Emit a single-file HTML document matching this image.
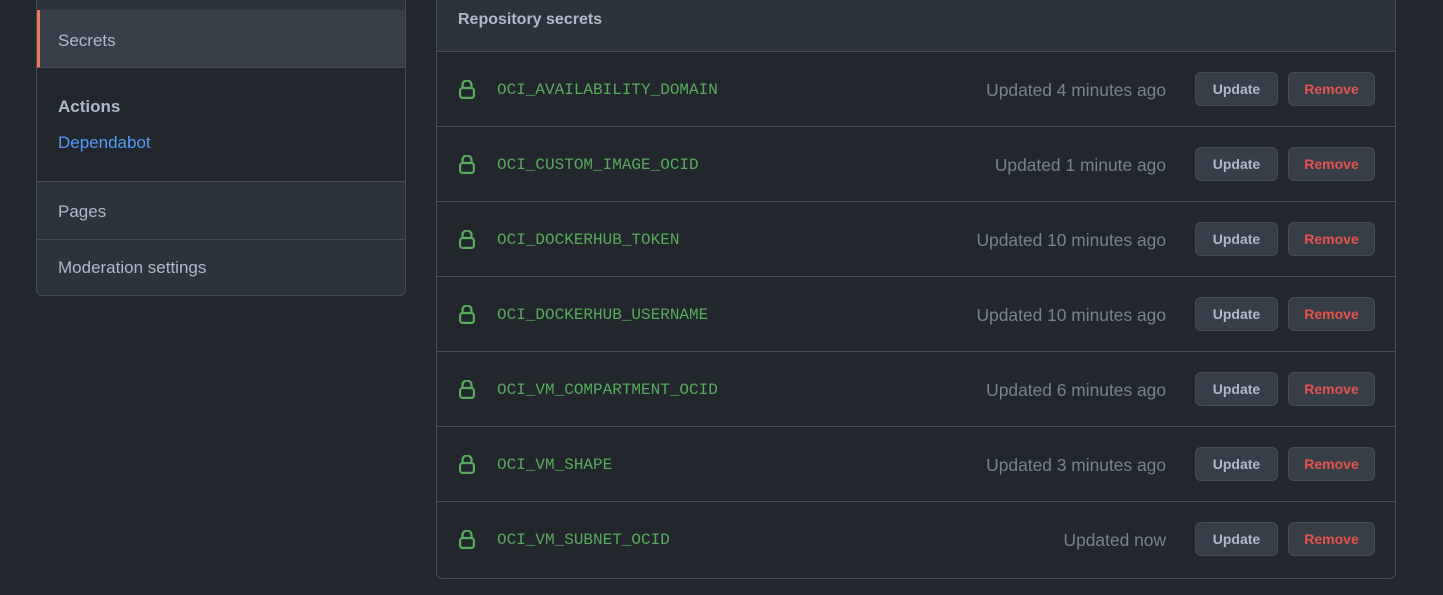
<!DOCTYPE html>
<html><head><meta charset="utf-8"><style>
*{box-sizing:border-box;margin:0;padding:0}
body{width:1443px;height:595px;background:#22272e;overflow:hidden;font-family:"Liberation Sans",sans-serif;position:relative}
.side{position:absolute;left:36px;top:-10px;width:370px;height:306px;border:1px solid #444c56;border-radius:6px;overflow:hidden;background:#2d333b}
.side div{position:absolute;left:0;right:0}
.sec{top:19px;height:58px;background:#373e47;border-left:3px solid #ec775c;border-bottom:1px solid #444c56;color:#adbac7;font-size:17px;padding:21px 0 0 18px}
.act{top:77px;height:114px;background:#22272e;border-bottom:1px solid #444c56}
.act p{position:absolute;left:21px;font-size:17px}
.pg{top:191px;height:58px;border-bottom:1px solid #444c56;color:#adbac7;font-size:17px;padding:20px 0 0 21px}
.mod{top:249px;height:58px;color:#adbac7;font-size:17px;padding:18px 0 0 21px}
.main{position:absolute;left:436px;top:-10px;width:960px;height:589px;border:1px solid #444c56;border-radius:6px;overflow:hidden}
.hd{height:61px;background:#2d333b;border-bottom:1px solid #444c56;color:#adbac7;font-weight:bold;font-size:16px;padding:20px 0 0 21px}
.row{height:75px;border-bottom:1px solid #444c56;position:relative}
.row:last-child{border-bottom:none}
.row svg{position:absolute;left:22px;top:28px}
.nm{position:absolute;left:60px;top:29px;font-family:"Liberation Mono",monospace;font-size:16px;color:#57ab5a}
.tm{position:absolute;right:229px;top:28px;font-size:17.4px;color:#768390}
.b{position:absolute;top:20px;height:34px;border:1px solid #444c56;background:#373e47;border-radius:6px;font-size:14px;font-weight:bold;text-align:center;line-height:32px}
.u{left:758px;width:83px;color:#adbac7}
.r{left:851px;width:87px;color:#e5534b}
</style></head><body>
<div class="side">
<div class="sec">Secrets</div>
<div class="act"><p style="top:29px;font-weight:bold;color:#adbac7">Actions</p><p style="top:65px;color:#539bf5">Dependabot</p></div>
<div class="pg">Pages</div>
<div class="mod">Moderation settings</div>
</div>
<div class="main">
<div class="hd">Repository secrets</div>
<div class="row"><svg width="16" height="19" viewBox="0 0 16 19"><path d="M3.5 7.5V5a4.5 4.5 0 0 1 9 0v2.5" fill="none" stroke="#57ab5a" stroke-width="2.2"/><rect x="1.1" y="8" width="13.8" height="9.9" rx="2.5" fill="none" stroke="#57ab5a" stroke-width="2.2"/></svg><span class="nm">OCI_AVAILABILITY_DOMAIN</span><span class="tm">Updated 4 minutes ago</span><span class="b u">Update</span><span class="b r">Remove</span></div>
<div class="row"><svg width="16" height="19" viewBox="0 0 16 19"><path d="M3.5 7.5V5a4.5 4.5 0 0 1 9 0v2.5" fill="none" stroke="#57ab5a" stroke-width="2.2"/><rect x="1.1" y="8" width="13.8" height="9.9" rx="2.5" fill="none" stroke="#57ab5a" stroke-width="2.2"/></svg><span class="nm">OCI_CUSTOM_IMAGE_OCID</span><span class="tm">Updated 1 minute ago</span><span class="b u">Update</span><span class="b r">Remove</span></div>
<div class="row"><svg width="16" height="19" viewBox="0 0 16 19"><path d="M3.5 7.5V5a4.5 4.5 0 0 1 9 0v2.5" fill="none" stroke="#57ab5a" stroke-width="2.2"/><rect x="1.1" y="8" width="13.8" height="9.9" rx="2.5" fill="none" stroke="#57ab5a" stroke-width="2.2"/></svg><span class="nm">OCI_DOCKERHUB_TOKEN</span><span class="tm">Updated 10 minutes ago</span><span class="b u">Update</span><span class="b r">Remove</span></div>
<div class="row"><svg width="16" height="19" viewBox="0 0 16 19"><path d="M3.5 7.5V5a4.5 4.5 0 0 1 9 0v2.5" fill="none" stroke="#57ab5a" stroke-width="2.2"/><rect x="1.1" y="8" width="13.8" height="9.9" rx="2.5" fill="none" stroke="#57ab5a" stroke-width="2.2"/></svg><span class="nm">OCI_DOCKERHUB_USERNAME</span><span class="tm">Updated 10 minutes ago</span><span class="b u">Update</span><span class="b r">Remove</span></div>
<div class="row"><svg width="16" height="19" viewBox="0 0 16 19"><path d="M3.5 7.5V5a4.5 4.5 0 0 1 9 0v2.5" fill="none" stroke="#57ab5a" stroke-width="2.2"/><rect x="1.1" y="8" width="13.8" height="9.9" rx="2.5" fill="none" stroke="#57ab5a" stroke-width="2.2"/></svg><span class="nm">OCI_VM_COMPARTMENT_OCID</span><span class="tm">Updated 6 minutes ago</span><span class="b u">Update</span><span class="b r">Remove</span></div>
<div class="row"><svg width="16" height="19" viewBox="0 0 16 19"><path d="M3.5 7.5V5a4.5 4.5 0 0 1 9 0v2.5" fill="none" stroke="#57ab5a" stroke-width="2.2"/><rect x="1.1" y="8" width="13.8" height="9.9" rx="2.5" fill="none" stroke="#57ab5a" stroke-width="2.2"/></svg><span class="nm">OCI_VM_SHAPE</span><span class="tm">Updated 3 minutes ago</span><span class="b u">Update</span><span class="b r">Remove</span></div>
<div class="row"><svg width="16" height="19" viewBox="0 0 16 19"><path d="M3.5 7.5V5a4.5 4.5 0 0 1 9 0v2.5" fill="none" stroke="#57ab5a" stroke-width="2.2"/><rect x="1.1" y="8" width="13.8" height="9.9" rx="2.5" fill="none" stroke="#57ab5a" stroke-width="2.2"/></svg><span class="nm">OCI_VM_SUBNET_OCID</span><span class="tm">Updated now</span><span class="b u">Update</span><span class="b r">Remove</span></div>
</div>
</body></html>
